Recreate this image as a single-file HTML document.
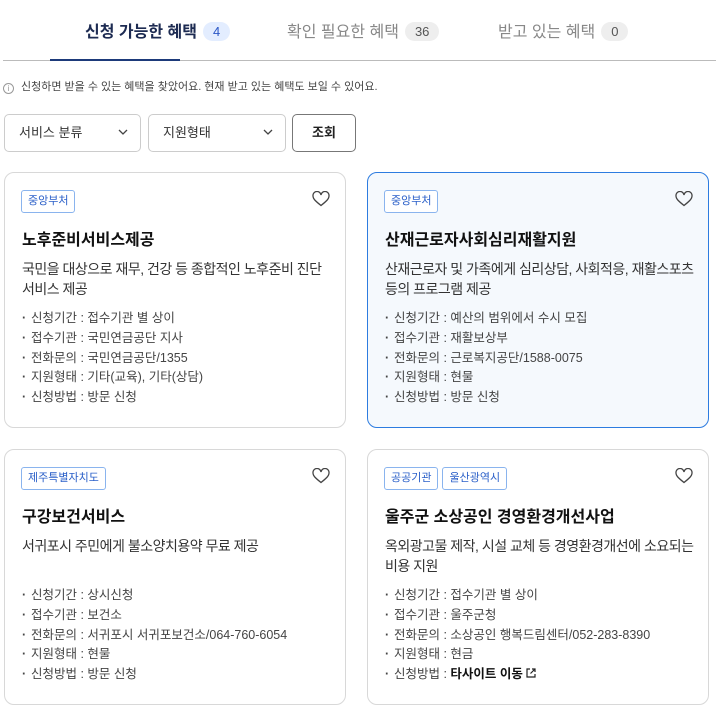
<!DOCTYPE html>
<html><head><meta charset="utf-8"><style>
*{box-sizing:border-box;margin:0;padding:0}
body{width:719px;height:713px;overflow:hidden;background:#fff;font-family:"Liberation Sans","Noto Sans CJK KR",sans-serif;color:#222;position:relative}
.abs{position:absolute}
.tab{position:absolute;top:21px;font-size:16px;height:24px;line-height:24px;color:#888;white-space:nowrap}
.tab.on{color:#1d2b52;font-weight:bold}
.badge{display:inline-block;margin-left:6px;padding:0 10px;height:19px;line-height:19px;border-radius:10px;background:#eee;color:#555;font-size:13px;font-weight:normal;vertical-align:1px}
.on .badge{background:#e3edff;color:#2a56c6}
.sel{position:absolute;top:114px;height:38px;border:1px solid #ccc;border-radius:5px;font-size:13px;line-height:36px;padding-left:14px;color:#333}
.sel svg{position:absolute;right:12px;top:14px}
.card{position:absolute;width:342px;height:256px;border:1px solid #d8d8d8;border-radius:10px;background:#fff}
.card.hl{border-color:#2d7ce0;background:#f5f9fd}
.tags{position:absolute;left:16px;top:17px;display:flex;gap:4px}
.tag{border:1px solid #8ab4ee;border-radius:3px;color:#2a5fc8;font-size:11px;height:23px;line-height:21px;padding:0 6px;background:#fff}
.heart{position:absolute;right:15px;top:18px}
.ttl{position:absolute;left:17px;top:53px;font-size:16px;font-weight:bold;color:#111}
.desc{position:absolute;left:17px;top:86px;font-size:14px;line-height:20px;color:#333;white-space:nowrap;letter-spacing:-0.5px}
.list{position:absolute;left:17px;top:136px;font-size:12.5px;line-height:19.8px;color:#444;list-style:none}
.list li:before{content:"·";display:inline-block;width:9px;color:#444;font-weight:bold}
</style></head><body>
<div class="tab on" style="left:85px">신청 가능한 혜택<span class="badge">4</span></div>
<div class="tab" style="left:287px">확인 필요한 혜택<span class="badge">36</span></div>
<div class="tab" style="left:498px">받고 있는 혜택<span class="badge">0</span></div>
<div class="abs" style="left:3px;top:60px;width:713px;height:1px;background:#bbb"></div>
<div class="abs" style="left:50px;top:59px;width:130px;height:2px;background:#1d3a7a"></div>
<div class="abs" style="left:3px;top:78px;font-size:11px;color:#444;white-space:nowrap"><span style="display:inline-block;width:11px;height:11px;border:1px solid #999;border-radius:50%;font-size:8px;line-height:9px;text-align:center;color:#999;margin-right:7px;vertical-align:-1px">i</span>신청하면 받을 수 있는 혜택을 찾았어요. 현재 받고 있는 혜택도 보일 수 있어요.</div>
<div class="sel" style="left:4px;width:137px">서비스 분류<svg width="10" height="6" viewBox="0 0 10 6"><path d="M1 1l4 4 4-4" fill="none" stroke="#444" stroke-width="1.3"/></svg></div>
<div class="sel" style="left:148px;width:138px">지원형태<svg width="10" height="6" viewBox="0 0 10 6"><path d="M1 1l4 4 4-4" fill="none" stroke="#444" stroke-width="1.3"/></svg></div>
<div class="abs" style="left:292px;top:114px;width:64px;height:38px;border:1px solid #777;border-radius:5px;font-size:13px;font-weight:bold;line-height:36px;text-align:center;color:#222">조회</div>

<div class="card" style="left:4px;top:172px">
<div class="tags"><span class="tag">중앙부처</span></div>
<svg class="heart" width="18" height="16" viewBox="0 0 18 16"><path d="M9 14.5C4 10.5 1 8 1 5a4 4 0 0 1 8-1 4 4 0 0 1 8 1c0 3-3 5.5-8 9.5z" fill="none" stroke="#444" stroke-width="1.3"/></svg>
<div class="ttl">노후준비서비스제공</div>
<div class="desc">국민을 대상으로 재무, 건강 등 종합적인 노후준비 진단<br>서비스 제공</div>
<ul class="list"><li>신청기간 : 접수기관 별 상이</li><li>접수기관 : 국민연금공단 지사</li><li>전화문의 : 국민연금공단/1355</li><li>지원형태 : 기타(교육), 기타(상담)</li><li>신청방법 : 방문 신청</li></ul>
</div>
<div class="card hl" style="left:367px;top:172px">
<div class="tags"><span class="tag">중앙부처</span></div>
<svg class="heart" width="18" height="16" viewBox="0 0 18 16"><path d="M9 14.5C4 10.5 1 8 1 5a4 4 0 0 1 8-1 4 4 0 0 1 8 1c0 3-3 5.5-8 9.5z" fill="none" stroke="#444" stroke-width="1.3"/></svg>
<div class="ttl">산재근로자사회심리재활지원</div>
<div class="desc">산재근로자 및 가족에게 심리상담, 사회적응, 재활스포츠<br>등의 프로그램 제공</div>
<ul class="list"><li>신청기간 : 예산의 범위에서 수시 모집</li><li>접수기관 : 재활보상부</li><li>전화문의 : 근로복지공단/1588-0075</li><li>지원형태 : 현물</li><li>신청방법 : 방문 신청</li></ul>
</div>
<div class="card" style="left:4px;top:449px">
<div class="tags"><span class="tag">제주특별자치도</span></div>
<svg class="heart" width="18" height="16" viewBox="0 0 18 16"><path d="M9 14.5C4 10.5 1 8 1 5a4 4 0 0 1 8-1 4 4 0 0 1 8 1c0 3-3 5.5-8 9.5z" fill="none" stroke="#444" stroke-width="1.3"/></svg>
<div class="ttl">구강보건서비스</div>
<div class="desc">서귀포시 주민에게 불소양치용약 무료 제공</div>
<ul class="list"><li>신청기간 : 상시신청</li><li>접수기관 : 보건소</li><li>전화문의 : 서귀포시 서귀포보건소/064-760-6054</li><li>지원형태 : 현물</li><li>신청방법 : 방문 신청</li></ul>
</div>
<div class="card" style="left:367px;top:449px">
<div class="tags"><span class="tag">공공기관</span><span class="tag">울산광역시</span></div>
<svg class="heart" width="18" height="16" viewBox="0 0 18 16"><path d="M9 14.5C4 10.5 1 8 1 5a4 4 0 0 1 8-1 4 4 0 0 1 8 1c0 3-3 5.5-8 9.5z" fill="none" stroke="#444" stroke-width="1.3"/></svg>
<div class="ttl">울주군 소상공인 경영환경개선사업</div>
<div class="desc">옥외광고물 제작, 시설 교체 등 경영환경개선에 소요되는<br>비용 지원</div>
<ul class="list"><li>신청기간 : 접수기관 별 상이</li><li>접수기관 : 울주군청</li><li>전화문의 : 소상공인 행복드림센터/052-283-8390</li><li>지원형태 : 현금</li><li>신청방법 : <b style="color:#111">타사이트 이동</b> <svg width="10" height="10" viewBox="0 0 10 10"><path d="M4 1H1v8h8V6M6 1h3v3M9 1L4.5 5.5" fill="none" stroke="#222" stroke-width="1.2"/></svg></li></ul>
</div>
</body></html>
